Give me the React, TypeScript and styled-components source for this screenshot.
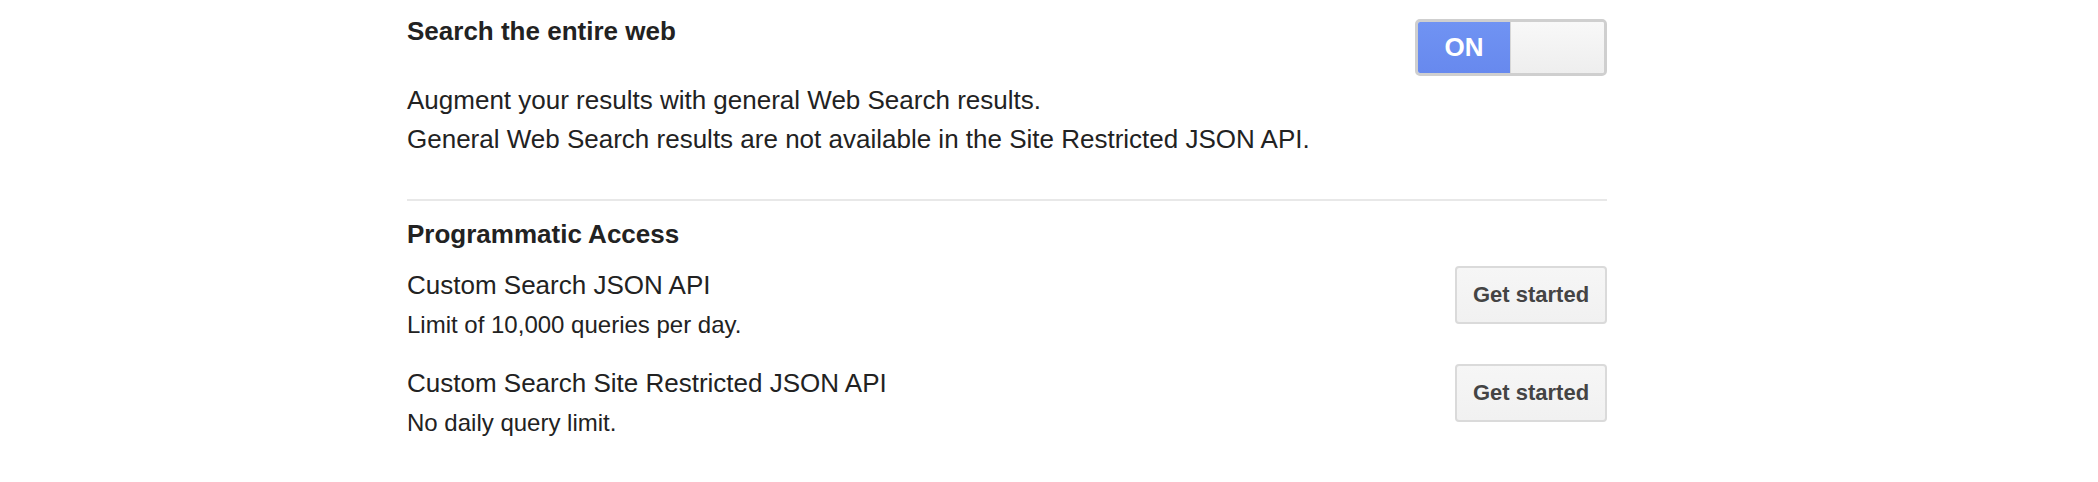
import React from "react";
import styled, { createGlobalStyle } from "styled-components";

const Global = createGlobalStyle`
  html, body { margin: 0; padding: 0; background: #fff; }
  body { font-family: "Liberation Sans", Arial, Helvetica, sans-serif; color: #222; }
`;

const Page = styled.div`
  padding: 12px 0 0 407px;
  width: 1200px;
`;

const SectionHead = styled.div`
  display: flex;
  justify-content: space-between;
  align-items: flex-start;
`;

const Title = styled.h2`
  margin: 0;
  font-size: 26px;
  line-height: 39px;
  font-weight: bold;
  color: #222;
`;

const Desc = styled.div`
  margin-top: 5px;
  font-size: 26px;
  line-height: 39px;
  color: #222;
`;

const Toggle = styled.div`
  margin-top: 7px;
  width: 192px;
  height: 57px;
  box-sizing: border-box;
  border: 3px solid #cfcfcf;
  border-radius: 5px;
  display: flex;
  overflow: hidden;
`;

const ToggleOn = styled.div`
  width: 92px;
  display: flex;
  align-items: center;
  justify-content: center;
  background: linear-gradient(#7093f3, #6789ee);
  color: #fff;
  font-weight: bold;
  font-size: 26px;
`;

const ToggleOff = styled.div`
  flex: 1;
  background: linear-gradient(#f8f8f8, #eeeeee);
  border-left: 1px solid #d6d6d6;
`;

const Divider = styled.hr`
  margin: 40px 0 0;
  border: 0;
  border-top: 2px solid #e8e8e8;
  height: 0;
`;

const Title2 = styled(Title)`
  margin-top: 14px;
`;

const Rows = styled.div`
  margin-top: 12px;
  display: flex;
  flex-direction: column;
  gap: 20px;
`;

const Row = styled.div`
  display: flex;
  justify-content: space-between;
  align-items: flex-start;
`;

const Name = styled.div`
  font-size: 26px;
  line-height: 39px;
  color: #222;
`;

const Sub = styled.div`
  font-size: 24px;
  line-height: 39px;
  color: #222;
`;

const Button = styled.button`
  width: 152px;
  height: 58px;
  box-sizing: border-box;
  border: 2px solid #dadada;
  border-radius: 4px;
  background: linear-gradient(#f6f6f6, #f1f1f1);
  color: #444;
  font-family: "Liberation Sans", Arial, sans-serif;
  font-weight: bold;
  font-size: 22px;
  padding: 0;
  cursor: pointer;
`;

const apis = [
  { name: "Custom Search JSON API", sub: "Limit of 10,000 queries per day." },
  { name: "Custom Search Site Restricted JSON API", sub: "No daily query limit." },
];

export default function App() {
  return (
    <>
      <Global />
      <Page>
        <SectionHead>
          <Title>Search the entire web</Title>
          <Toggle>
            <ToggleOn>ON</ToggleOn>
            <ToggleOff />
          </Toggle>
        </SectionHead>
        <Desc>
          Augment your results with general Web Search results.
          <br />
          General Web Search results are not available in the Site Restricted JSON API.
        </Desc>
        <Divider />
        <Title2>Programmatic Access</Title2>
        <Rows>
          {apis.map((a) => (
            <Row key={a.name}>
              <div>
                <Name>{a.name}</Name>
                <Sub>{a.sub}</Sub>
              </div>
              <Button>Get started</Button>
            </Row>
          ))}
        </Rows>
      </Page>
    </>
  );
}
